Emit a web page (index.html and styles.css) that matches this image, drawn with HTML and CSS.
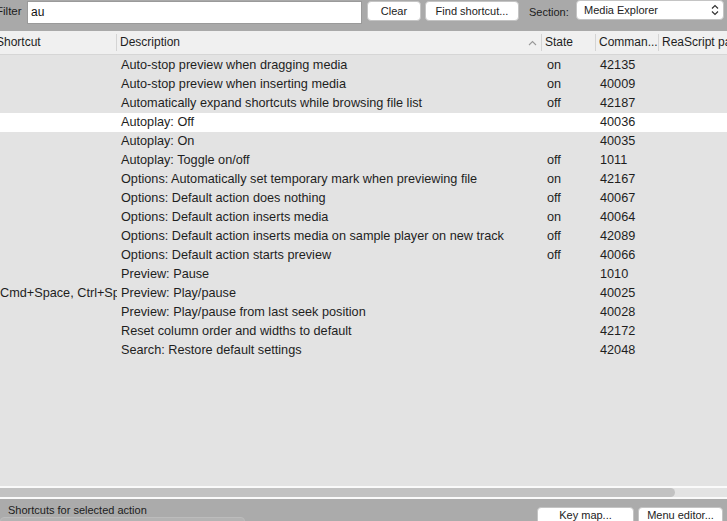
FILE: index.html
```html
<!DOCTYPE html>
<html>
<head>
<meta charset="utf-8">
<link rel="stylesheet" href="styles.css">
</head>
<body>
<div class="win">
  <div class="topbar">
    <span class="lbl filter-lbl">Filter</span>
    <div class="input">au</div>
    <div class="btn btn-clear">Clear</div>
    <div class="btn btn-find">Find shortcut...</div>
    <span class="lbl section-lbl">Section:</span>
    <div class="select">
      <span>Media Explorer</span>
      <svg class="updown" width="8" height="12" viewBox="0 0 8 12"><path d="M1 4.5 L4 1.5 L7 4.5 M1 7.5 L4 10.5 L7 7.5" fill="none" stroke="#333" stroke-width="1.2"/></svg>
    </div>
  </div>
  <div class="header">
    <div class="hcell c-short"><span class="shift">Shortcut</span></div>
    <div class="hcell c-desc"><span>Description</span><svg class="sort" width="9" height="6" viewBox="0 0 9 6"><path d="M1 5 L4.5 1.5 L8 5" fill="none" stroke="#999" stroke-width="1.1"/></svg></div>
    <div class="hcell c-state">State</div>
    <div class="hcell c-cmd">Comman...</div>
    <div class="hcell c-rs">ReaScript pa</div>
  </div>
  <div class="list">
    <div class="row"><div class="c-short"></div><div class="c-desc">Auto-stop preview when dragging media</div><div class="c-state">on</div><div class="c-cmd">42135</div><div></div></div>
    <div class="row"><div class="c-short"></div><div class="c-desc">Auto-stop preview when inserting media</div><div class="c-state">on</div><div class="c-cmd">40009</div><div></div></div>
    <div class="row"><div class="c-short"></div><div class="c-desc">Automatically expand shortcuts while browsing file list</div><div class="c-state">off</div><div class="c-cmd">42187</div><div></div></div>
    <div class="row sel"><div class="c-short"></div><div class="c-desc">Autoplay: Off</div><div class="c-state"></div><div class="c-cmd">40036</div><div></div></div>
    <div class="row"><div class="c-short"></div><div class="c-desc">Autoplay: On</div><div class="c-state"></div><div class="c-cmd">40035</div><div></div></div>
    <div class="row"><div class="c-short"></div><div class="c-desc">Autoplay: Toggle on/off</div><div class="c-state">off</div><div class="c-cmd">1011</div><div></div></div>
    <div class="row"><div class="c-short"></div><div class="c-desc">Options: Automatically set temporary mark when previewing file</div><div class="c-state">on</div><div class="c-cmd">42167</div><div></div></div>
    <div class="row"><div class="c-short"></div><div class="c-desc">Options: Default action does nothing</div><div class="c-state">off</div><div class="c-cmd">40067</div><div></div></div>
    <div class="row"><div class="c-short"></div><div class="c-desc">Options: Default action inserts media</div><div class="c-state">on</div><div class="c-cmd">40064</div><div></div></div>
    <div class="row"><div class="c-short"></div><div class="c-desc">Options: Default action inserts media on sample player on new track</div><div class="c-state">off</div><div class="c-cmd">42089</div><div></div></div>
    <div class="row"><div class="c-short"></div><div class="c-desc">Options: Default action starts preview</div><div class="c-state">off</div><div class="c-cmd">40066</div><div></div></div>
    <div class="row"><div class="c-short"></div><div class="c-desc">Preview: Pause</div><div class="c-state"></div><div class="c-cmd">1010</div><div></div></div>
    <div class="row"><div class="c-short">Cmd+Space, Ctrl+Sp</div><div class="c-desc">Preview: Play/pause</div><div class="c-state"></div><div class="c-cmd">40025</div><div></div></div>
    <div class="row"><div class="c-short"></div><div class="c-desc">Preview: Play/pause from last seek position</div><div class="c-state"></div><div class="c-cmd">40028</div><div></div></div>
    <div class="row"><div class="c-short"></div><div class="c-desc">Reset column order and widths to default</div><div class="c-state"></div><div class="c-cmd">42172</div><div></div></div>
    <div class="row"><div class="c-short"></div><div class="c-desc">Search: Restore default settings</div><div class="c-state"></div><div class="c-cmd">42048</div><div></div></div>
  </div>
  <div class="hscroll"><div class="thumb"></div></div>
  <div class="bottombar">
    <div class="bottom-left">
      <span class="lbl bottom-lbl">Shortcuts for selected action</span>
      <div class="shortbox"></div>
    </div>
    <div class="btn btn-key">Key map...</div>
    <div class="btn btn-menu">Menu editor...</div>
  </div>
</div>
</body>
</html>
```
FILE: styles.css
```css
html, body {
  margin: 0;
  padding: 0;
  width: 727px;
  height: 521px;
  overflow: hidden;
  font-family: "Liberation Sans", Arial, sans-serif;
  font-size: 12px;
  color: #1e1e1e;
}
.win {
  width: 727px;
  height: 521px;
  display: flex;
  flex-direction: column;
  background: #e3e3e3;
}
.topbar {
  height: 31px;
  flex: none;
  background: #a9a9a9;
  display: flex;
  align-items: flex-start;
  box-sizing: border-box;
}
.lbl { color: #1c1c1c; white-space: nowrap; }
.filter-lbl {
  margin-left: -4px;
  margin-top: 5px;
  width: 31px;
  font-size: 11.5px;
}
.input {
  width: 335px;
  height: 23px;
  margin-top: 1px;
  box-sizing: border-box;
  background: #fff;
  border: 1px solid #9a9a9a;
  padding: 2px 3px;
  line-height: 16px;
  font-size: 12px;
  color: #111;
}
.btn {
  background: #fff;
  border: 1px solid #c4c4c4;
  border-radius: 4px;
  box-sizing: border-box;
  text-align: center;
  font-size: 11px;
  line-height: 18px;
  color: #222;
}
.btn-clear {
  margin-left: 5px;
  margin-top: 1px;
  width: 54px;
  height: 20px;
}
.btn-find {
  margin-left: 4px;
  margin-top: 1px;
  width: 94px;
  height: 20px;
}
.section-lbl {
  margin-left: 10px;
  margin-top: 6px;
  font-size: 11px;
  width: 37px;
}
.select {
  margin-left: 10px;
  margin-top: 0;
  width: 148px;
  height: 20px;
  box-sizing: border-box;
  background: #fff;
  border: 1px solid #c4c4c4;
  border-radius: 4px;
  display: flex;
  align-items: center;
  justify-content: space-between;
  padding: 0 4px 0 7px;
  font-size: 11px;
  color: #222;
}
.header {
  height: 24px;
  flex: none;
  background: #f0f0f0;
  border-bottom: 1px solid #d6d6d6;
  box-sizing: border-box;
  display: grid;
  grid-template-columns: 117px 425px 54px 63px 1fr;
  align-items: center;
}
.hcell {
  height: 17px;
  line-height: 17px;
  padding-left: 3px;
  border-right: 1px solid #d4d4d4;
  white-space: nowrap;
  overflow: hidden;
  color: #1e1e1e;
}
.hcell.c-rs { border-right: none; }
.hcell.c-short { padding-left: 0; }
.shift { margin-left: -4px; }
.hcell.c-desc {
  display: flex;
  justify-content: space-between;
  align-items: center;
  padding-right: 4px;
}
.list {
  flex: 1;
  background: #e3e3e3;
  padding-top: 1px;
}
.row {
  height: 19px;
  line-height: 19px;
  display: grid;
  grid-template-columns: 117px 425px 54px 63px 1fr;
  white-space: nowrap;
  color: #1e1e1e;
  font-size: 12.7px;
}
.row > div { overflow: hidden; }
.row.sel { background: #ffffff; }
.row .c-desc { padding-left: 4px; }
.row .c-state { padding-left: 5px; }
.row .c-cmd { padding-left: 4px; }
.hscroll {
  flex: none;
  height: 9px;
  border-top: 2px solid #fafafa;
  border-bottom: 2px solid #fafafa;
  background: #e3e3e3;
}
.thumb {
  width: 675px;
  height: 9px;
  background: #c2c2c2;
  border-radius: 0 5px 5px 0;
}
.bottombar {
  flex: none;
  height: 22px;
  background: #ababab;
  display: flex;
  align-items: flex-start;
  overflow: hidden;
}
.bottom-left {
  width: 537px;
  display: flex;
  flex-direction: column;
}
.bottom-lbl {
  margin-left: 8px;
  margin-top: 4px;
  font-size: 11px;
  line-height: 14px;
}
.shortbox {
  width: 245px;
  height: 8px;
  background: #b3b3b3;
  border: 1px solid #bcbcbc;
  border-radius: 4px 4px 0 0;
  box-sizing: border-box;
}
.btn-key {
  margin-top: 8px;
  width: 97px;
  height: 20px;
  line-height: 14px;
}
.btn-menu {
  margin-top: 8px;
  margin-left: 4px;
  width: 85px;
  height: 20px;
  line-height: 14px;
}
```
